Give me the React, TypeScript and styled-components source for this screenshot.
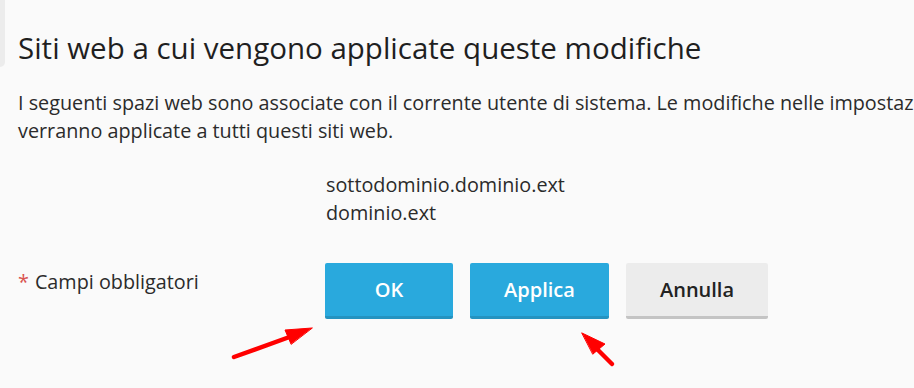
import styled, { createGlobalStyle } from "styled-components";

const GlobalStyle = createGlobalStyle`
  html, body {
    margin: 0;
    padding: 0;
    overflow: hidden;
    background: #fafafa;
  }
  body {
    font-family: "Open Sans", "Noto Sans", sans-serif;
    color: #222;
  }
`;

const Page = styled.div`
  position: relative;
  display: flex;
  width: 1160px;
  min-height: 388px;
`;

const SideEdge = styled.div`
  flex: 0 0 5px;
  height: 67px;
  background: #ececec;
  border-bottom-right-radius: 6px;
`;

const Content = styled.div`
  flex: 1;
  padding-left: 13px;
`;

const Title = styled.h2`
  margin: 28px 0 0;
  font-size: 29.5px;
  font-weight: 400;
  line-height: 40px;
  color: #1f1f1f;
`;

const Intro = styled.p`
  margin: 21px 0 0;
  width: 1100px;
  font-size: 19.8px;
  line-height: 28px;
  color: #2b2b2b;
`;

const FormRow = styled.div<{ $top: number }>`
  display: grid;
  grid-template-columns: 307px 1fr;
  margin-top: ${(p) => p.$top}px;
`;

const Label = styled.div`
  font-size: 19.8px;
  line-height: 28px;
  padding-top: 5px;
  color: #2b2b2b;
`;

const Required = styled.span`
  color: #d9534f;
  margin-right: 6px;
`;

const DomainList = styled.div`
  padding-left: 1px;
  font-size: 19.8px;
  line-height: 28px;
  color: #2b2b2b;
`;

const Buttons = styled.div`
  display: flex;
  gap: 17px;
`;

const Button = styled.button<{ $primary?: boolean; $width: number }>`
  width: ${(p) => p.$width}px;
  height: 56px;
  border: 0;
  border-radius: 2px;
  border-bottom: 3px solid ${(p) => (p.$primary ? "#2593c0" : "#c4c4c4")};
  background: ${(p) => (p.$primary ? "#29a9dd" : "#ececec")};
  color: ${(p) => (p.$primary ? "#fff" : "#222")};
  font-family: "Open Sans", "Noto Sans", sans-serif;
  font-size: 20px;
  font-weight: 600;
  padding: 0;
  cursor: pointer;
`;

const Annotations = styled.svg`
  position: absolute;
  left: 0;
  top: 0;
  pointer-events: none;
`;

export default function App() {
  return (
    <>
      <GlobalStyle />
      <Page>
        <SideEdge />
        <Content>
          <Title>Siti web a cui vengono applicate queste modifiche</Title>
          <Intro>
            I seguenti spazi web sono associate con il corrente utente di
            sistema. Le modifiche nelle impostazioni dell'hosting verranno
            applicate a tutti questi siti web.
          </Intro>
          <FormRow $top={26}>
            <div />
            <DomainList>
              <div>sottodominio.dominio.ext</div>
              <div>dominio.ext</div>
            </DomainList>
          </FormRow>
          <FormRow $top={36}>
            <Label>
              <Required>*</Required>Campi obbligatori
            </Label>
            <Buttons>
              <Button $primary $width={128}>OK</Button>
              <Button $primary $width={139}>Applica</Button>
              <Button $width={142}>Annulla</Button>
            </Buttons>
          </FormRow>
        </Content>
        <Annotations width="914" height="388">
          <g fill="#ff0000" stroke="#ff0000" strokeLinecap="round" strokeLinejoin="round">
            <line x1="234" y1="357" x2="295" y2="335" strokeWidth="4.5" />
            <polygon points="312,328 285,330 291,344" strokeWidth="1" />
            <line x1="612" y1="364" x2="594" y2="346" strokeWidth="4.5" />
            <polygon points="582,333 605,344 593,354" strokeWidth="1" />
          </g>
        </Annotations>
      </Page>
    </>
  );
}
